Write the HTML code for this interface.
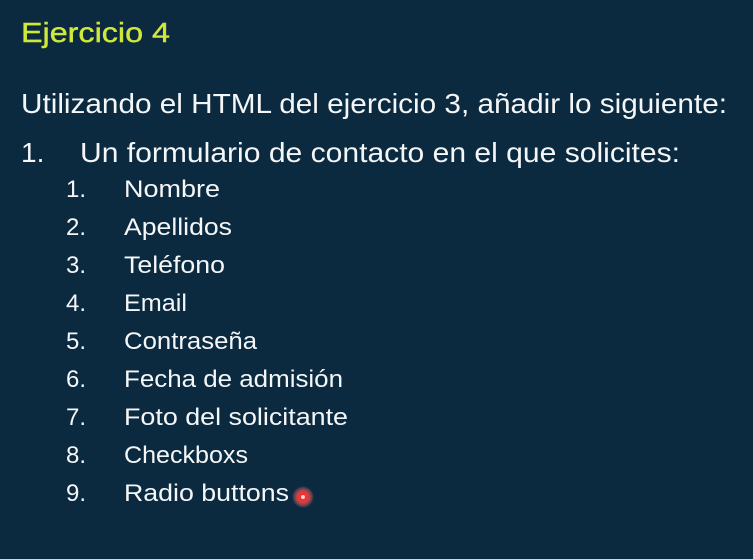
<!DOCTYPE html>
<html><head><meta charset="utf-8"><style>
html,body{margin:0;padding:0;background:#0b2a3f;width:753px;height:559px;overflow:hidden}
svg{display:block}
text{font-family:"Liberation Sans",sans-serif;fill:#f4f6f8}
</style></head><body>
<svg width="753" height="559" viewBox="0 0 753 559">
<defs><radialGradient id="g"><stop offset="0" stop-color="#ff2020"/><stop offset="0.45" stop-color="#e83a3a"/><stop offset="1" stop-color="#f08080" stop-opacity="0"/></radialGradient></defs>
<text x="21" y="42" font-size="28" style="fill:#cfe83a;stroke:#cfe83a;stroke-width:0.4" textLength="149" lengthAdjust="spacingAndGlyphs">Ejercicio 4</text>
<text x="21" y="113" font-size="28" textLength="706" lengthAdjust="spacingAndGlyphs">Utilizando el HTML del ejercicio 3, añadir lo siguiente:</text>
<text x="21" y="162" font-size="28">1.</text>
<text x="80" y="162" font-size="28" textLength="600" lengthAdjust="spacingAndGlyphs">Un formulario de contacto en el que solicites:</text>
<g font-size="24">
<text x="66" y="197">1.</text><text x="124" y="197" textLength="96" lengthAdjust="spacingAndGlyphs">Nombre</text>
<text x="66" y="235">2.</text><text x="124" y="235" textLength="108" lengthAdjust="spacingAndGlyphs">Apellidos</text>
<text x="66" y="273">3.</text><text x="124" y="273" textLength="101" lengthAdjust="spacingAndGlyphs">Teléfono</text>
<text x="66" y="311">4.</text><text x="124" y="311" textLength="63" lengthAdjust="spacingAndGlyphs">Email</text>
<text x="66" y="349">5.</text><text x="124" y="349" textLength="133" lengthAdjust="spacingAndGlyphs">Contraseña</text>
<text x="66" y="387">6.</text><text x="124" y="387" textLength="219" lengthAdjust="spacingAndGlyphs">Fecha de admisión</text>
<text x="66" y="425">7.</text><text x="124" y="425" textLength="224" lengthAdjust="spacingAndGlyphs">Foto del solicitante</text>
<text x="66" y="463">8.</text><text x="124" y="463" textLength="124" lengthAdjust="spacingAndGlyphs">Checkboxs</text>
<text x="66" y="501">9.</text><text x="124" y="501" textLength="165" lengthAdjust="spacingAndGlyphs">Radio buttons</text>
</g>
<circle cx="303" cy="497" r="11" fill="url(#g)"/>
<circle cx="303" cy="497" r="2" fill="#ffd0d0"/>
</svg>
</body></html>
